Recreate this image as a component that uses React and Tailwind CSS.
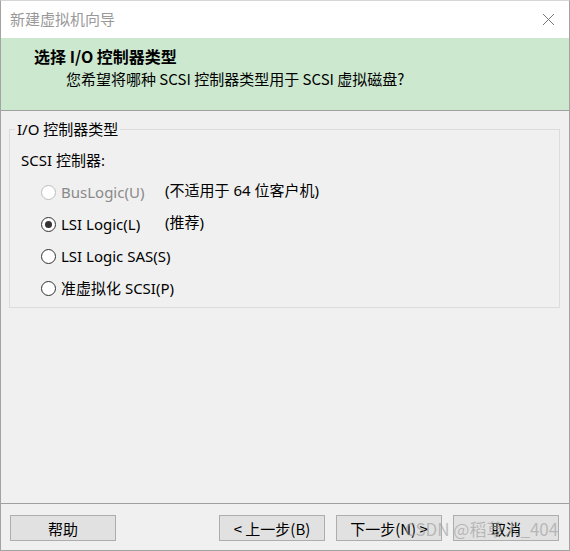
import React from "react";

const ui = { fontFamily: '"Noto Sans", "Noto Sans CJK SC", sans-serif' };
const cjk = { fontFamily: '"Noto Sans CJK SC", "Noto Sans", sans-serif' };

const options = [
  { label: "BusLogic(U)", note: "(不适用于 64 位客户机)", disabled: true },
  { label: "LSI Logic(L)", note: "(推荐)", checked: true },
  { label: "LSI Logic SAS(S)" },
  { label: "准虚拟化 SCSI(P)" },
];

function Radio({ checked, disabled }) {
  return (
    <span
      className={`flex h-[15px] w-[15px] shrink-0 items-center justify-center rounded-full border bg-white ${
        disabled ? "border-[#bcbcbc]" : "border-[#333333]"
      }`}
    >
      {checked && <span className="h-[7px] w-[7px] rounded-full bg-[#333333]" />}
    </span>
  );
}

function Button({ children }) {
  return (
    <button
      type="button"
      className="h-[26px] w-[106px] border border-[#adadad] bg-[#e1e1e1] text-[15px] leading-none text-black"
    >
      {children}
    </button>
  );
}

export default function App() {
  return (
    <div
      className="relative flex h-[551px] w-[570px] flex-col border border-[#a3a3a3] border-t-[#d6d6d6] bg-[#f0f0f0] text-black"
      style={ui}
    >
      <div className="flex h-[37px] items-center justify-between bg-white pl-[9px] pr-[14px]">
        <span className="text-[15px] text-[#999999]" style={cjk}>
          新建虚拟机向导
        </span>
        <svg width="13" height="13" viewBox="0 0 13 13" className="mt-[-1px]">
          <path d="M1 1L12 12M12 1L1 12" stroke="#7a7a7a" strokeWidth="1" fill="none" />
        </svg>
      </div>

      <div className="box-content h-[64px] border-b border-[#a0a0a0] bg-[#cce8cf] pt-[8px]" style={cjk}>
        <div className="pl-[33px] text-[16px] font-bold leading-[20px]">选择 I/O 控制器类型</div>
        <div className="mt-[3px] pl-[65px] text-[15px] leading-[20px]">
          您希望将哪种 SCSI 控制器类型用于 SCSI 虚拟磁盘?
        </div>
      </div>

      <div className="flex-1 pt-[8px]">
        <fieldset className="ml-[8px] mr-[9px] border border-[#dcdcdc] pb-[3px] pl-[5px]">
          <legend className="px-[2px] text-[15px] leading-[20px]">I/O 控制器类型</legend>
          <div className="ml-[6px] mt-[11px] text-[15px] leading-[20px]">SCSI 控制器:</div>
          <div className="mt-[6px] flex flex-col">
            {options.map((o) => (
              <div key={o.label} className="ml-[26px] flex h-[32px] items-center whitespace-nowrap">
                <Radio checked={o.checked} disabled={o.disabled} />
                <span
                  className={`ml-[5px] w-[104px] shrink-0 text-[15px] ${o.disabled ? "text-[#8a8a8a]" : ""}`}
                >
                  {o.label}
                </span>
                {o.note && <span className="mt-[-4px] text-[15px]">{o.note}</span>}
              </div>
            ))}
          </div>
        </fieldset>
      </div>

      <div className="flex h-[47px] items-start border-t border-[#a0a0a0] pl-[9px] pr-[10px] pt-[11px]" style={cjk}>
        <Button>帮助</Button>
        <div className="ml-auto flex gap-[11px]">
          <Button>&lt; 上一步(B)</Button>
          <Button>下一步(N) &gt;</Button>
          <Button>取消</Button>
        </div>
      </div>

      <div
        className="pointer-events-none absolute left-[404px] top-[515px] whitespace-nowrap text-[17px] leading-[26px] text-[#9a9a9a]/60"
        style={cjk}
      >
        CSDN @稻草人_404
      </div>
    </div>
  );
}
